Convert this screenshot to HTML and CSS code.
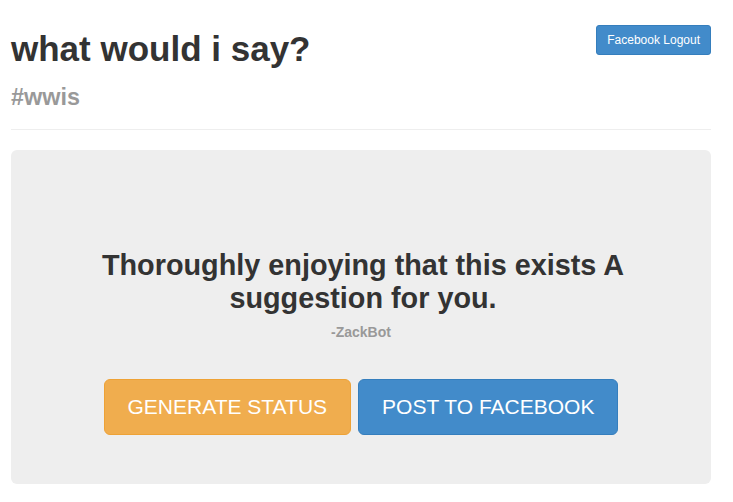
FILE: index.html
```html
<!DOCTYPE html>
<html>
<head>
<meta charset="utf-8">
<link rel="stylesheet" href="styles.css">
</head>
<body>
<div class="container">
  <header class="page-header">
    <div class="titles">
      <h1 class="title">what would i say?</h1>
      <div class="subtitle">#wwis</div>
    </div>
    <button class="btn btn-primary btn-sm">Facebook Logout</button>
  </header>
  <div class="jumbotron">
    <h2 class="quote">Thoroughly enjoying that this exists A suggestion for you.</h2>
    <div class="author">-ZackBot</div>
    <div class="actions">
      <button class="btn btn-warning btn-lg">GENERATE STATUS</button>
      <button class="btn btn-primary btn-lg">POST TO FACEBOOK</button>
    </div>
  </div>
</div>
</body>
</html>
```
FILE: styles.css
```css
* { box-sizing: border-box; }
html, body { margin: 0; padding: 0; background: #fff; }
body {
  font-family: "Liberation Sans", Arial, sans-serif;
  color: #333;
  font-size: 14px;
  line-height: 1.43;
}
.container {
  width: 700px;
  margin-left: 11px;
}
.page-header {
  display: flex;
  justify-content: space-between;
  align-items: flex-start;
  border-bottom: 1px solid #eee;
  padding-bottom: 19px;
  margin-bottom: 20px;
}
.title {
  margin: 30px 0 0;
  font-size: 35px;
  line-height: 38.5px;
  font-weight: 700;
  color: #333;
}
.subtitle {
  margin-top: 16px;
  font-size: 23.4px;
  line-height: 1.1;
  font-weight: 700;
  color: #999;
}
.btn {
  font-family: "Liberation Sans", Arial, sans-serif;
  display: inline-block;
  border: 1px solid transparent;
  color: #fff;
  cursor: pointer;
  text-align: center;
}
.btn-sm {
  margin-top: 25px;
  font-size: 12px;
  line-height: 18px;
  padding: 5px 10px;
  border-radius: 3px;
}
.btn-lg {
  font-size: 21px;
  line-height: 26px;
  padding: 14px 23px;
  border-radius: 6px;
}
.btn-primary { background: #428bca; border-color: #357ebd; }
.btn-warning { background: #f0ad4e; border-color: #eea236; }
.jumbotron {
  background: #eee;
  border-radius: 6px;
  padding: 99px 30px 49px;
  text-align: center;
}
.quote {
  margin: 0 0 0 4px;
  font-size: 28.8px;
  line-height: 33px;
  font-weight: 700;
  color: #333;
}
.author {
  margin-top: 7px;
  font-size: 14px;
  line-height: 20px;
  font-weight: 700;
  color: #999;
}
.actions {
  margin-top: 37px;
  display: flex;
  justify-content: center;
  gap: 7px;
}
```
